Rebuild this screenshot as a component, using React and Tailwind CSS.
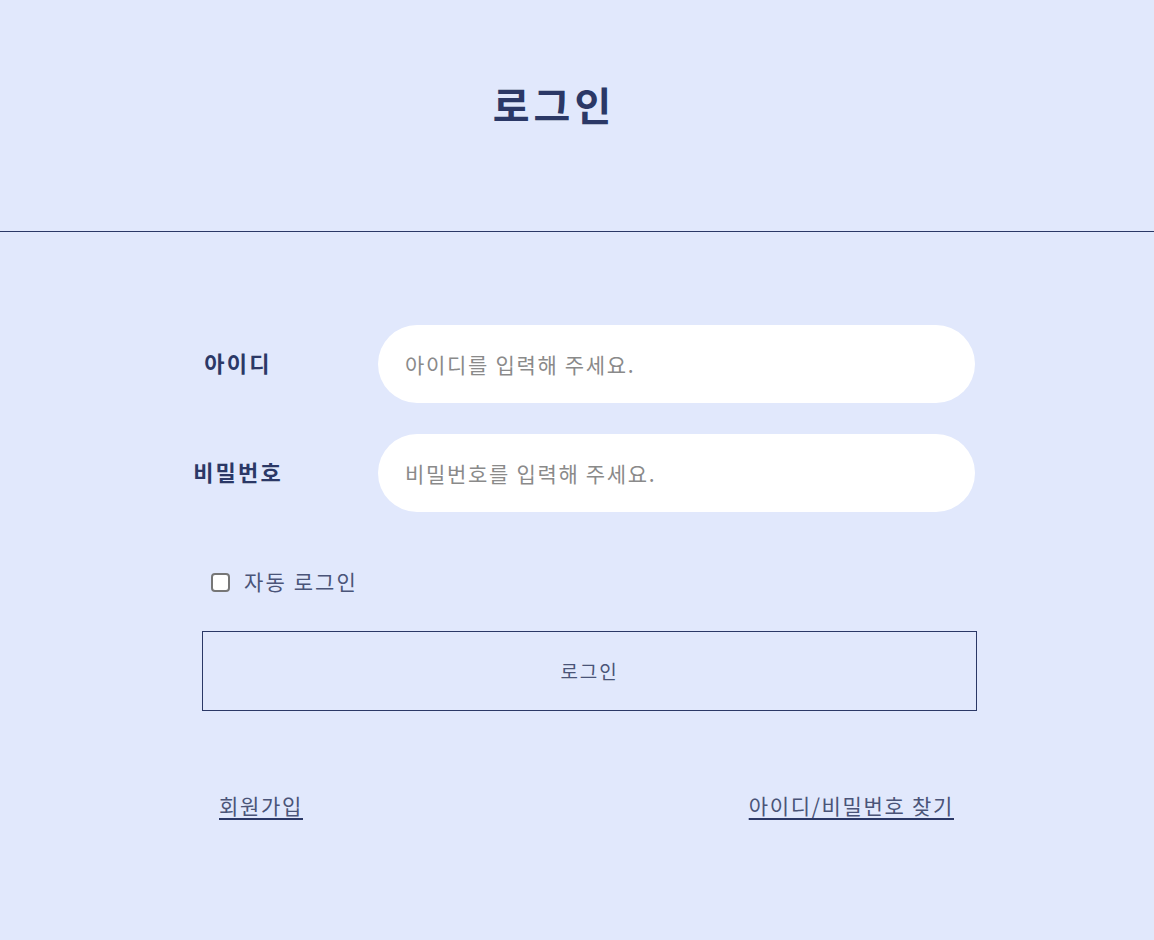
import { useState } from 'react';

const font = { fontFamily: '"Noto Sans CJK KR", "Noto Sans", sans-serif' };

const Field = ({ label, placeholder, type = 'text' }) => (
    <div className="flex items-center h-[78px]">
        <div className="w-[72px] flex justify-center pb-[4px]">
            <span className="whitespace-nowrap text-[22px] tracking-[0.1em] font-bold text-[#2b3866]">{label}</span>
        </div>
        <input
            type={type}
            placeholder={placeholder}
            className="ml-[104px] w-[597px] h-[78px] rounded-full bg-white pl-[27px] text-[21px] tracking-[0.08em] text-[#333] placeholder:text-[#8a8a8a] outline-none"
        />
    </div>
);

export default function App() {
    const [auto, setAuto] = useState(false);

    return (
        <div style={font} className="min-h-[940px] bg-[#e1e8fc] text-[#2b3866]">
            <header className="h-[232px] border-b border-[#2b3866] flex justify-center pt-[75px]">
                <h1 className="ml-[-46px] text-[40px] tracking-[0.1em] font-bold leading-[58px] text-[#2b3866]">로그인</h1>
            </header>

            <main className="ml-[202px] w-[775px] pt-[93px]">
                <div className="flex flex-col gap-[31px]">
                    <Field label="아이디" placeholder="아이디를 입력해 주세요." />
                    <Field label="비밀번호" placeholder="비밀번호를 입력해 주세요." type="password" />
                </div>

                <label className="mt-[58px] ml-[9px] flex items-center gap-[14px] h-[24px] cursor-pointer">
                    <input
                        type="checkbox"
                        checked={auto}
                        onChange={() => setAuto(!auto)}
                        className="w-[19px] h-[19px] appearance-none rounded-[4px] border-2 border-[#767676] bg-white checked:bg-[#2b3866]"
                    />
                    <span className="text-[21px] tracking-[0.1em] text-[#4a5478]">자동 로그인</span>
                </label>

                <button className="mt-[37px] w-[775px] h-[80px] border border-[#2b3866] text-[19px] tracking-[0.1em] text-[#4a5478]">
                    로그인
                </button>

                <div className="mt-[79px] flex justify-between px-[17px] text-[21px] tracking-[0.08em] text-[#4a5478]">
                    <a href="#" className="underline decoration-2 decoration-[#2b3866] underline-offset-[4px]">회원가입</a>
                    <a href="#" className="mr-[6px] underline decoration-2 decoration-[#2b3866] underline-offset-[4px]">아이디/비밀번호 찾기</a>
                </div>
            </main>
        </div>
    );
}
